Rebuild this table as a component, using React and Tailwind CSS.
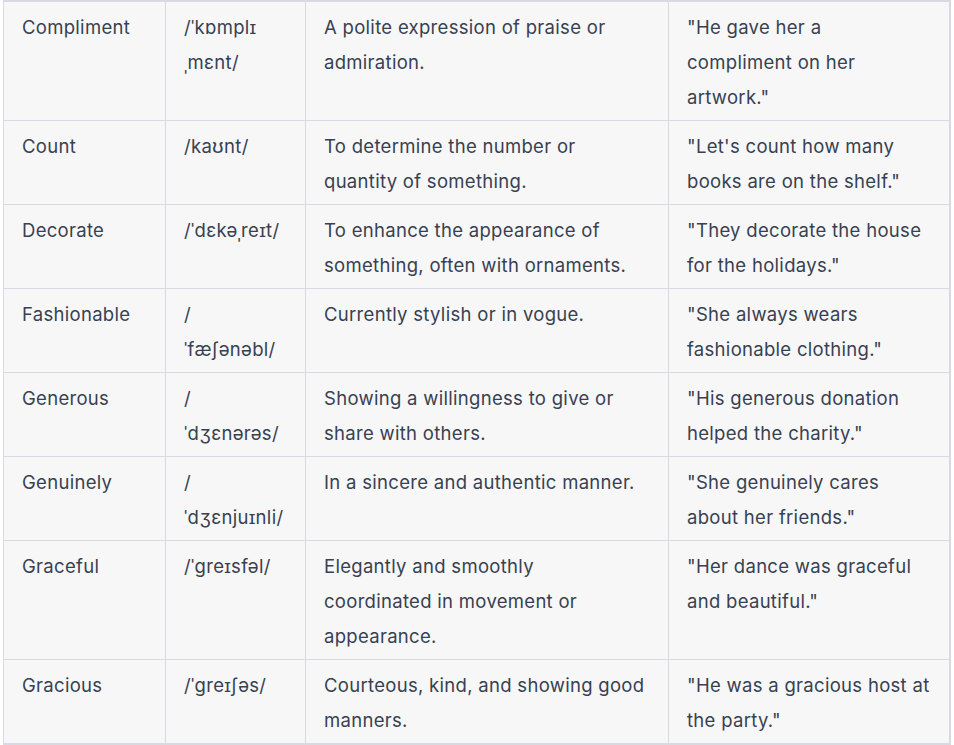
const ROWS = [
  {
    word: 'Compliment',
    ipa: ['/ˈkɒmplɪ', 'ˌmɛnt/'],
    meaning: 'A polite expression of praise or admiration.',
    example: '"He gave her a compliment on her artwork."',
  },
  {
    word: 'Count',
    ipa: ['/kaʊnt/'],
    meaning: 'To determine the number or quantity of something.',
    example: '"Let\'s count how many books are on the shelf."',
  },
  {
    word: 'Decorate',
    ipa: ['/ˈdɛkəˌreɪt/'],
    meaning: 'To enhance the appearance of something, often with ornaments.',
    example: '"They decorate the house for the holidays."',
  },
  {
    word: 'Fashionable',
    ipa: ['/', 'ˈfæʃənəbl/'],
    meaning: 'Currently stylish or in vogue.',
    example: '"She always wears fashionable clothing."',
  },
  {
    word: 'Generous',
    ipa: ['/', 'ˈdʒɛnərəs/'],
    meaning: 'Showing a willingness to give or share with others.',
    example: '"His generous donation helped the charity."',
  },
  {
    word: 'Genuinely',
    ipa: ['/', 'ˈdʒɛnjuɪnli/'],
    meaning: 'In a sincere and authentic manner.',
    example: '"She genuinely cares about her friends."',
  },
  {
    word: 'Graceful',
    ipa: ['/ˈɡreɪsfəl/'],
    meaning: 'Elegantly and smoothly coordinated in movement or appearance.',
    example: '"Her dance was graceful and beautiful."',
  },
  {
    word: 'Gracious',
    ipa: ['/ˈɡreɪʃəs/'],
    meaning: 'Courteous, kind, and showing good manners.',
    example: '"He was a gracious host at the party."',
  },
]

const cell = 'border border-[#d9d9e3] align-top pl-[18px] pt-[7.5px] pb-[5.5px]'

export default function App() {
  return (
    <div className="min-h-screen bg-white pl-[3px] font-['Inter','Liberation_Sans',sans-serif] text-[18.5px] leading-[35px] tracking-[0.3px] text-[#374151]">
      <table className="table-fixed border-collapse w-[946px] bg-[#f7f7f8] border-t-2 border-r-2 border-b-2 border-[#d9d9e3]">
        <colgroup>
          <col className="w-[162px]" />
          <col className="w-[140px]" />
          <col className="w-[363px]" />
          <col className="w-[281px]" />
        </colgroup>
        <tbody>
          {ROWS.map((r) => (
            <tr key={r.word}>
              <td className={`${cell} pr-[18px]`}>{r.word}</td>
              <td className={`${cell} pr-[18px]`}>
                {r.ipa.map((line, i) => (
                  <div key={i}>{line}</div>
                ))}
              </td>
              <td className={`${cell} pr-[22px]`}>{r.meaning}</td>
              <td className={`${cell} pr-[18px]`}>{r.example}</td>
            </tr>
          ))}
        </tbody>
      </table>
    </div>
  )
}
